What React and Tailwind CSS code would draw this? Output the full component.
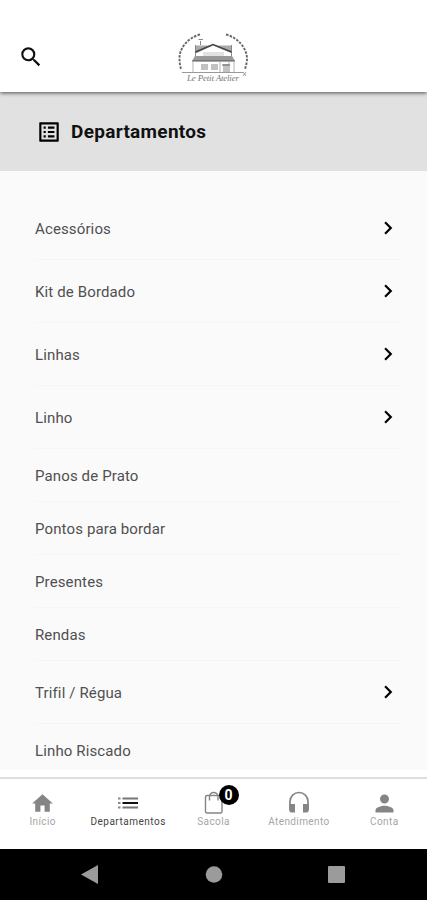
import { MdSearch, MdOutlineListAlt, MdChevronRight, MdHome, MdPerson } from "react-icons/md";

const departments = [
  { name: "Acessórios", sub: true },
  { name: "Kit de Bordado", sub: true },
  { name: "Linhas", sub: true },
  { name: "Linho", sub: true },
  { name: "Panos de Prato" },
  { name: "Pontos para bordar" },
  { name: "Presentes" },
  { name: "Rendas" },
  { name: "Trifil / Régua", sub: true },
  { name: "Linho Riscado" },
];

function Logo() {
  return (
    <svg width="72" height="52" viewBox="0 0 72 52" fill="none">
      {/* wreath */}
      <g stroke="#666" strokeWidth="1.9" strokeDasharray="2.5 1.3">
        <path d="M23 3.500C10 7 2 18 2.500 28C2.500 31 3 35 4 38" />
        <path d="M49 3.500C62 7 70 18 70 28C70 31 69 35 68 38" />
      </g>
      {/* house */}
      <path d="M18.500 14.500H36L20 22H18.500zM36 14.500H54.500V22L36 14.500z" fill="#aaa" />
      <path d="M18.500 14V26M54.500 14V26M23.500 10V14M21.500 8.500H26" stroke="#888" />
      <path d="M18.500 21L36 13.500L54.500 21" stroke="#444" strokeWidth="1.5" />
      <path d="M26 21H47V26H26z" fill="#e2e2e2" />
      <path d="M18 25H55L58 30H15z" fill="#999" />
      <path d="M15 30H58" stroke="#555" strokeWidth="1.2" />
      <path d="M16 30V42M57 30V42M43 31V42M52 31V42" stroke="#b5b5b5" />
      <path d="M24 33H31V39H24zM34 33H41V39H34zM46 33H53V41H46z" fill="#c2c2c2" />
      <path d="M45 34H53" stroke="#666" strokeWidth="1" />
      <path d="M5 41.500H66" stroke="#999" strokeWidth="1" />
      <path d="M66 41l3 4M69 41l-3 4" stroke="#777" strokeWidth=".7" />
      <text x="10" y="50" fill="#777" fontSize="9" fontStyle="italic" fontFamily="Liberation Serif, serif" textLength="52">Le Petit Atelier</text>
    </svg>
  );
}

function BagIcon() {
  return (
    <svg width="20" height="24" viewBox="0 0 20 24" fill="none" stroke="#858585" strokeWidth="1.4">
      <rect x="1.500" y="4.500" width="16.500" height="17.500" rx="1.500" />
      <path d="M5.500 9.500V6C5.500 0 14 0 14 6V9.500" />
    </svg>
  );
}

function ListIcon() {
  return (
    <svg width="22" height="14" viewBox="0 0 22 14">
      <path d="M1 2.500H3.500M1 7H3.500M1 11.500H3.500" stroke="#888" strokeWidth="2.200" />
      <path d="M5.500 2.500H21M5.500 11.500H21" stroke="#777" strokeWidth="2.200" />
      <path d="M5.500 7H21" stroke="#111" strokeWidth="2" />
    </svg>
  );
}

function HeadsetIcon() {
  return (
    <svg width="22" height="24" viewBox="0 0 22 24">
      <path d="M2 19V10.500a9 9 0 0 1 18 0V19" fill="none" stroke="#858585" strokeWidth="1.7" />
      <path d="M1.300 13H7V21.500H3.300a2 2 0 0 1-2-2zM15 13H20.700V19.500a2 2 0 0 1-2 2H15z" fill="#858585" />
    </svg>
  );
}

function NavItem({ label, active, children }) {
  return (
    <div className={active ? "flex-1 flex flex-col items-center text-[#444]" : "flex-1 flex flex-col items-center text-[#a5a5a5]"}>
      <div className="relative h-[26px] flex items-center justify-center">{children}</div>
      <span className={active ? "text-[10px] leading-3 tracking-[0.5px]" : "text-[10px] leading-3 tracking-[0.4px]"}>{label}</span>
    </div>
  );
}

export default function App() {
  return (
    <div className="w-full h-[900px] flex flex-col overflow-hidden bg-[#fafafa] font-['Roboto',sans-serif]">
      <header className="relative z-10 h-[92px] shrink-0 grid grid-cols-3 bg-white pt-[31px] shadow-[0_1px_4px_rgba(0,0,0,0.65)]">
        <MdSearch size={26} className="ml-[18px] mt-[13px] text-[#111]" />
        <div className="flex justify-center">
          <Logo />
        </div>
      </header>

      <div className="h-[79px] shrink-0 bg-[#e1e1e1] flex items-center gap-[9px] pl-[36px]">
        <MdOutlineListAlt size={26} className="text-black" />
        <h1 className="text-[19px] font-bold text-[#111] tracking-[0.3px] pt-0.5">Departamentos</h1>
      </div>

      <main className="flex-1 min-h-0 overflow-hidden pt-[26px] pl-[35px] pr-[27px]">
        {departments.map((item) => (
          <div
            key={item.name}
            className={
              item.sub
                ? "h-[63px] flex items-center justify-between border-b border-[#f5f5f5]"
                : "h-[53px] flex items-center justify-between border-b border-[#f5f5f5]"
            }
          >
            <span className="text-[15px] text-[#505050] tracking-[0.13px] pt-0.5">{item.name}</span>
            {item.sub && <MdChevronRight size={26} className="text-black -mr-px" />}
          </div>
        ))}
      </main>

      <div className="shrink-0 bg-white pt-[7px]">
        <nav className="h-[72px] border-t-2 border-[#dedede] flex pt-[11px]">
          <NavItem label="Início">
            <MdHome size={25} className="text-[#858585]" />
          </NavItem>
          <NavItem label="Departamentos" active>
            <ListIcon />
          </NavItem>
          <NavItem label="Sacola">
            <BagIcon />
            <span className="absolute left-[15px] -top-[5px] w-5 h-5 rounded-full bg-black text-white text-sm font-bold flex items-center justify-center">0</span>
          </NavItem>
          <NavItem label="Atendimento">
            <HeadsetIcon />
          </NavItem>
          <NavItem label="Conta">
            <MdPerson size={27} className="text-[#858585]" />
          </NavItem>
        </nav>
      </div>

      <div className="h-[51px] shrink-0 bg-black">
        <svg width="427" height="51" viewBox="0 0 427 51" fill="#9b9b9b">
          <path d="M81 25.500L98 16V35z" />
          <circle cx="214" cy="25.500" r="8.300" />
          <rect x="328" y="17" width="17" height="17" rx="1" />
        </svg>
      </div>
    </div>
  );
}
